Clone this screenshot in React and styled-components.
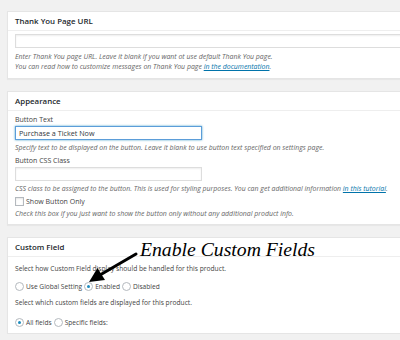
import React from 'react';
import styled, { createGlobalStyle } from 'styled-components';

const GlobalStyle = createGlobalStyle`
  html, body {
    margin: 0;
    padding: 0;
    background: #f1f1f1;
    overflow: hidden;
  }
  body {
    font-family: "Open Sans", "Noto Sans", sans-serif;
    color: #444;
  }
`;

const Page = styled.div`
  position: relative;
  width: 420px;
  padding: 11px 0 0 7px;
  display: flex;
  flex-direction: column;
  gap: 12px;
`;

const Panel = styled.div`
  background: #fff;
  border: 1px solid #e5e5e5;
  box-shadow: 0 1px 1px rgba(0, 0, 0, 0.04);
  padding-bottom: ${(p) => p.$pb || 6}px;
`;

const PanelHead = styled.h2`
  margin: 0;
  height: 18px;
  line-height: 18px;
  padding: 0 7px;
  font-size: 7.9px;
  font-weight: 600;
  color: #23282d;
  border-bottom: 1px solid #eee;
`;

const PanelBody = styled.div`
  padding: ${(p) => p.$pt || 3}px 7px 0;
  display: flex;
  flex-direction: column;
  align-items: flex-start;
`;

const Input = styled.div`
  box-sizing: border-box;
  width: ${(p) => p.$w || '100%'};
  height: 14px;
  margin-top: ${(p) => p.$mt || 0}px;
  background: #fff;
  border: 1px solid ${(p) => (p.$focus ? '#5b9dd9' : '#ddd')};
  box-shadow: ${(p) =>
    p.$focus ? '0 0 2px rgba(30, 140, 190, 0.8)' : 'inset 0 1px 2px rgba(0,0,0,0.07)'};
  font-size: 7.2px;
  line-height: 12px;
  padding: 0 3px;
  color: #32373c;
`;

const Desc = styled.p`
  margin: ${(p) => p.$mt || 0}px 0 0;
  font-size: 6.95px;
  line-height: 10px;
  font-style: italic;
  color: #666;
  white-space: nowrap;
`;

const Link = styled.a`
  color: #0073aa;
  text-decoration: underline;
`;

const Label = styled.div`
  margin-top: ${(p) => p.$mt || 0}px;
  font-size: 7px;
  line-height: 10px;
  color: #444;
`;

const Text = styled.p`
  margin: ${(p) => p.$mt || 0}px 0 0;
  font-size: 6.7px;
  line-height: 10px;
  color: #444;
  white-space: nowrap;
`;

const ChoiceRow = styled.div`
  margin-top: ${(p) => p.$mt || 0}px;
  display: flex;
  align-items: center;
  height: 10px;
  font-size: ${(p) => p.$fs || 6.6}px;
  color: #444;
  white-space: nowrap;
`;

const Choice = styled.span`
  display: inline-flex;
  align-items: center;
  gap: 2px;
  margin-right: 2px;
`;

const Radio = styled.span`
  box-sizing: border-box;
  width: 9px;
  height: 9px;
  border-radius: 50%;
  border: 1px solid #b4b9be;
  background: #fff;
  display: inline-flex;
  align-items: center;
  justify-content: center;
  &::after {
    content: '';
    width: 3px;
    height: 3px;
    border-radius: 50%;
    background: ${(p) => (p.$on ? '#1e8cbe' : 'transparent')};
  }
`;

const Check = styled.span`
  box-sizing: border-box;
  width: 9px;
  height: 9px;
  border: 1px solid #b4b9be;
  background: #fff;
  box-shadow: inset 0 1px 2px rgba(0, 0, 0, 0.1);
`;

const Note = styled.div`
  position: absolute;
  left: 140px;
  top: 238px;
  font-family: "Liberation Serif", "Times New Roman", serif;
  font-style: italic;
  font-size: 19.7px;
  line-height: 22px;
  color: #000;
  white-space: nowrap;
`;

const Arrow = styled.svg`
  position: absolute;
  left: 0;
  top: 0;
  pointer-events: none;
`;

export default function App() {
  return (
    <>
      <GlobalStyle />
      <Page>
        <Panel $pb={6}>
          <PanelHead>Thank You Page URL</PanelHead>
          <PanelBody $pt={3}>
            <Input />
            <Desc $mt={4}>
              Enter Thank You page URL. Leave it blank if you want ot use default Thank You page.
            </Desc>
            <Desc>
              You can read how to customize messages on Thank You page{' '}
              <Link>in the documentation</Link>.
            </Desc>
          </PanelBody>
        </Panel>

        <Panel $pb={5}>
          <PanelHead>Appearance</PanelHead>
          <PanelBody $pt={4}>
            <Label>Button Text</Label>
            <Input $w="187px" $mt={1} $focus>
              Purchase a Ticket Now
            </Input>
            <Desc $mt={3}>
              Specify text to be displayed on the button. Leave it blank to use button text specified on settings page.
            </Desc>
            <Label $mt={3}>Button CSS Class</Label>
            <Input $w="187px" $mt={1} />
            <Desc $mt={3}>
              CSS class to be assigned to the button. This is used for styling purposes. You can get additional information{' '}
              <Link>in this tutorial</Link>.
            </Desc>
            <ChoiceRow $mt={2} $fs={7}>
              <Choice>
                <Check /> Show Button Only
              </Choice>
            </ChoiceRow>
            <Desc $mt={3}>
              Check this box if you just want to show the button only without any additional product info.
            </Desc>
          </PanelBody>
        </Panel>

        <Panel $pb={6}>
          <PanelHead>Custom Field</PanelHead>
          <PanelBody $pt={7}>
            <Text>Select how Custom Field display should be handled for this product.</Text>
            <ChoiceRow $mt={7}>
              <Choice>
                <Radio /> Use Global Setting
              </Choice>
              <Choice>
                <Radio $on /> Enabled
              </Choice>
              <Choice>
                <Radio /> Disabled
              </Choice>
            </ChoiceRow>
            <Text $mt={7}>Select which custom fields are displayed for this product.</Text>
            <ChoiceRow $mt={9}>
              <Choice>
                <Radio $on /> All fields
              </Choice>
              <Choice>
                <Radio /> Specific fields:
              </Choice>
            </ChoiceRow>
          </PanelBody>
        </Panel>

        <Note>Enable Custom Fields</Note>
        <Arrow width="400" height="340" viewBox="0 0 400 340">
          <line x1="136" y1="254" x2="100" y2="275" stroke="#000" strokeWidth="3" strokeLinecap="round" />
          <polygon points="89,282 105,280 97.5,268" fill="#000" />
        </Arrow>
      </Page>
    </>
  );
}
